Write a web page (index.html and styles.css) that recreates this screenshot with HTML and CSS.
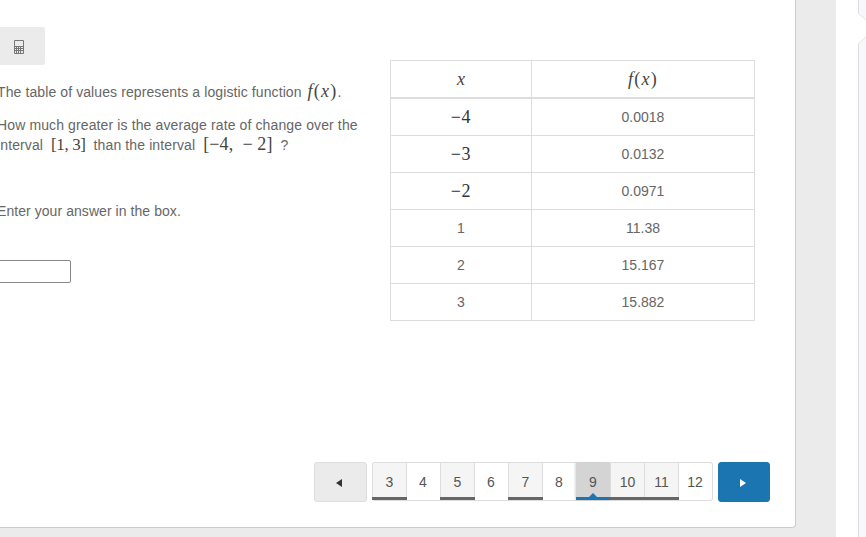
FILE: index.html
```html
<!DOCTYPE html>
<html lang="en">
<head>
    <meta charset="UTF-8">
    <title>Item 9</title>
    <link rel="stylesheet" href="styles.css">
</head>
<body>
<main class="panel">
    <button class="calc-btn" type="button" aria-label="Calculator">
        <svg class="calc-icon" width="10" height="14" viewBox="0 0 10 14">
            <path d="M.5.5h9v13h-9zM.5 6.5h9M.5 8.5h9M.5 10.5h9M2.5 6.5v7M4.5 6.5v7M6.5 6.5v7" fill="none" stroke="#777" stroke-width="1"/>
        </svg>
    </button>
    <div class="content">
        <section class="question">
            <p class="line-first">The table of values represents a logistic function <span class="math fx"><i>f</i>(<i>x</i>)</span>.</p>
            <p class="line-second">How much greater is the average rate of change over the interval <span class="math gap tight">[1, 3]</span> than the interval <span class="math gap">[−4, &nbsp;− 2]</span> ?</p>
            <p class="line-third">Enter your answer in the box.</p>
            <input class="answer" type="text" aria-label="Answer">
        </section>
        <table class="values">
            <thead>
                <tr><th class="math"><i>x</i></th><th class="math fx"><i>f</i>(<i>x</i>)</th></tr>
            </thead>
            <tbody>
                <tr><td class="math">−4</td><td>0.0018</td></tr>
                <tr><td class="math">−3</td><td>0.0132</td></tr>
                <tr><td class="math">−2</td><td>0.0971</td></tr>
                <tr><td>1</td><td>11.38</td></tr>
                <tr><td>2</td><td>15.167</td></tr>
                <tr><td>3</td><td>15.882</td></tr>
            </tbody>
        </table>
    </div>
    <nav class="pager">
        <button class="arrow prev" type="button" aria-label="Previous"><span class="tri tri-left"></span></button>
        <ul class="pages">
            <li class="done">3</li>
            <li>4</li>
            <li class="done">5</li>
            <li>6</li>
            <li class="done">7</li>
            <li>8</li>
            <li class="cur">9</li>
            <li class="done">10</li>
            <li class="done">11</li>
            <li>12</li>
        </ul>
        <button class="arrow next" type="button" aria-label="Next"><span class="tri tri-right"></span></button>
    </nav>
</main>
<div class="gutter"></div>
<aside class="side">
    <svg class="notch" width="9" height="32" viewBox="0 0 9 32">
        <path d="M0 0L9 8V23L0 31Z" fill="#fff"/>
        <path d="M0 0L9 8M9 23L0 31" fill="none" stroke="#e4e4e8"/>
    </svg>
</aside>
</body>
</html>
```

FILE: styles.css
```css
html, body{
    margin: 0;
    height: 100%;
}
body{
    display: flex;
    align-items: flex-start;
    height: 537px;
    overflow: hidden;
    background: #ebebeb;
    font-family: "Liberation Sans", Arial, sans-serif;
    font-size: 14px;
    color: #666;
}
.panel{
    width: 795px;
    height: 527px;
    flex: none;
    display: flex;
    flex-direction: column;
    background: #fff;
    border-right: 1px solid #ccc;
    border-bottom: 1px solid #ccc;
    border-bottom-right-radius: 4px;
    overflow: hidden;
}
.calc-btn{
    width: 52px;
    height: 38px;
    flex: none;
    margin: 27px 0 0 -7px;
    padding: 0;
    border: 0;
    border-radius: 2px;
    background: #ebebeb;
}
.calc-icon{
    display: block;
    margin: 2px auto 0;
}
.content{
    display: flex;
    margin-top: -5px;
    height: 261px;
}
.question{
    width: 390px;
    flex: none;
    margin-left: -3px;
    margin-right: 3px;
    box-sizing: border-box;
    padding-right: 20px;
}
.question p{
    margin: 0;
    line-height: 19px;
}
.line-first{
    padding-top: 22px;
    letter-spacing: .1px;
}
.question .line-second{
    margin-top: 14px;
    letter-spacing: .12px;
}
.question .line-third{
    margin-top: 47px;
    letter-spacing: .06px;
}
.math{
    font-family: "Liberation Serif", "DejaVu Serif", serif;
    font-size: 18px;
    color: #444;
}
.fx{
    letter-spacing: 1.2px;
    margin-left: 2px;
}
.gap{
    margin: 0 4px;
    letter-spacing: .1px;
}
.tight{
    font-size: 17px;
    letter-spacing: -.4px;
}
.answer{
    display: block;
    width: 90px;
    height: 23px;
    box-sizing: border-box;
    margin: 39px 0 0 -16px;
    border: 1px solid #888;
    border-radius: 2px;
    background: #fff;
}
.values{
    width: 365px;
    height: 261px;
    border-collapse: collapse;
    table-layout: fixed;
    text-align: center;
}
.values th{
    height: 36px;
    padding: 0;
    border: 1px solid #ddd;
    border-bottom-width: 2px;
    font-weight: normal;
}
.values td{
    height: 36px;
    padding: 0;
    border: 1px solid #ddd;
}
.values th:first-child, .values td:first-child{
    width: 140px;
}
.values td.math{
    font-size: 18px;
    letter-spacing: .6px;
    color: #333;
}
.pager{
    display: flex;
    gap: 5px;
    margin: 141px 0 0 314px;
}
.arrow{
    width: 53px;
    height: 40px;
    padding: 0 3px 0 0;
    border: 1px solid #ddd;
    border-radius: 3px;
    background: #ebebeb;
}
.next{
    width: 52px;
    background: #1a75b0;
    border-color: #1a75b0;
}
.tri{
    display: inline-block;
    border-style: solid;
    border-color: transparent;
    border-width: 4px 0;
}
.tri-left{
    border-right: 6px solid #333;
}
.tri-right{
    border-left: 6px solid #fff;
}
.pages{
    display: flex;
    width: 341px;
    height: 39px;
    box-sizing: border-box;
    margin: 0;
    padding: 0;
    list-style: none;
    border: 1px solid #ddd;
    border-left: 0;
    border-radius: 3px;
    background: #fff;
    color: #555;
}
.pages li{
    flex: none;
    width: 34px;
    line-height: 38px;
    text-align: center;
    position: relative;
}
.pages .done{
    width: 35px;
    margin-right: -1px;
    background: #f5f5f5;
    box-shadow: inset 0 -3px 0 #666, inset 1px 0 0 #ddd, inset -1px 0 0 #ddd;
}
.pages .cur{
    background: #d4d4d4;
    box-shadow: inset 0 -3px 0 #1a75b0, -1px 0 2px rgba(0,0,0,.15);
}
.cur::after{
    content: "";
    position: absolute;
    left: 50%;
    bottom: 3px;
    margin-left: -4px;
    border: 4px solid transparent;
    border-top: 0;
    border-bottom-color: #1a75b0;
}
.gutter{
    width: 40px;
    height: 537px;
    flex: none;
    background: #ebebeb;
}
.side{
    flex: 1;
    height: 537px;
    background: #fff;
    display: flex;
    justify-content: flex-end;
}
.side::after{
    content: "";
    width: 7px;
    flex: none;
    border-left: 1px solid #ddd;
    background: #f8f8fc;
}
.notch{
    position: absolute;
    left: 858px;
    top: 13px;
}
```
